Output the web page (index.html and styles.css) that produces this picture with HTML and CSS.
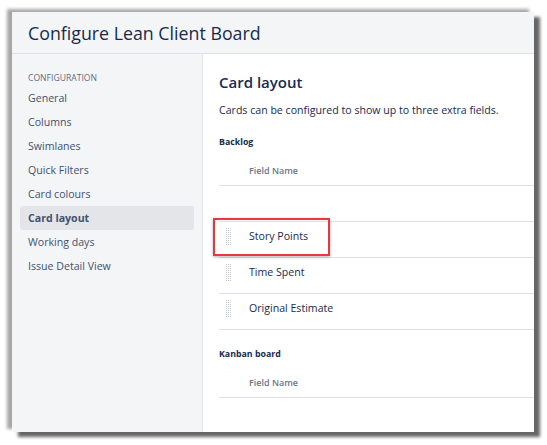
FILE: index.html
```html
<!DOCTYPE html>
<html>
<head>
<meta charset="utf-8">
<link rel="stylesheet" href="styles.css">
</head>
<body>
<div class="panel">
  <header class="header">
    <h1 class="title">Configure Lean Client Board</h1>
  </header>
  <div class="body">
    <nav class="sidebar">
      <div class="nav-heading">CONFIGURATION</div>
      <ul class="nav-list">
        <li class="nav-item">General</li>
        <li class="nav-item">Columns</li>
        <li class="nav-item">Swimlanes</li>
        <li class="nav-item">Quick Filters</li>
        <li class="nav-item">Card colours</li>
        <li class="nav-item is-active">Card layout</li>
        <li class="nav-item">Working days</li>
        <li class="nav-item">Issue Detail View</li>
      </ul>
    </nav>
    <main class="main">
      <h2 class="page-title">Card layout</h2>
      <p class="desc">Cards can be configured to show up to three extra fields.</p>

      <h3 class="section-title">Backlog</h3>
      <div class="table">
        <div class="thead">Field Name</div>
        <div class="row"></div>
        <div class="row highlighted">
          <span class="handle"></span><span class="cell">Story Points</span>
          <span class="callout"></span>
        </div>
        <div class="row"><span class="handle"></span><span class="cell">Time Spent</span></div>
        <div class="row"><span class="handle"></span><span class="cell">Original Estimate</span></div>
      </div>

      <h3 class="section-title kanban">Kanban board</h3>
      <div class="table">
        <div class="thead">Field Name</div>
      </div>
    </main>
  </div>
</div>
</body>
</html>
```
FILE: styles.css
```css
html, body {
  margin: 0;
  padding: 0;
  background: #ffffff;
}
body {
  font-family: "Open Sans", "Noto Sans", sans-serif;
  color: #172b4d;
  width: 547px;
  height: 445px;
  overflow: hidden;
}
.panel {
  margin: 12px 0 0 12px;
  width: 522px;
  height: 420px;
  background: #ffffff;
  display: flex;
  flex-direction: column;
  box-shadow: -5px -3px 3px rgba(0,0,0,0.35), 6px 5px 3px rgba(0,0,0,0.6);
  overflow: hidden;
}
.header {
  height: 41px;
  background: #f4f5f7;
  border-bottom: 1px solid #dfe1e6;
  display: flex;
  align-items: center;
  padding-left: 16px;
  flex: none;
}
.title {
  margin: 0;
  font-size: 17.8px;
  font-weight: 400;
  color: #172b4d;
}
.body {
  flex: 1;
  display: flex;
  min-height: 0;
}
.sidebar {
  width: 174px;
  flex: none;
  background: #f4f5f7;
  border-right: 1px solid #dfe1e6;
  padding: 16px 8px 0;
}
.nav-heading {
  font-size: 8.6px;
  line-height: 16px;
  color: #5e6c84;
  padding-left: 8px;
  font-weight: 400;
}
.nav-list {
  list-style: none;
  margin: 0;
  padding: 0;
}
.nav-item {
  height: 24px;
  line-height: 24px;
  padding-left: 8px;
  font-size: 10.6px;
  color: #42526e;
  border-radius: 3px;
}
.nav-item.is-active {
  background: #e4e5e9;
  font-weight: 700;
}
.main {
  flex: 1;
  padding: 16px 0 0 16px;
  min-width: 0;
}
.page-title {
  margin: 0;
  font-size: 15px;
  line-height: 24px;
  font-weight: 600;
  color: #172b4d;
}
.desc {
  margin: 7px 0 0;
  font-size: 10.6px;
  line-height: 18px;
  color: #172b4d;
}
.section-title {
  margin: 15px 0 0;
  font-size: 8.8px;
  line-height: 16px;
  font-weight: 700;
  color: #172b4d;
}
.section-title.kanban {
  margin-top: 16px;
}
.table {
  margin-top: 6px;
}
.thead {
  height: 29px;
  line-height: 30px;
  padding-left: 30px;
  font-size: 9px;
  font-weight: 600;
  color: #6b778c;
  border-bottom: 1px solid #dfe1e6;
}
.row {
  box-sizing: border-box;
  padding-bottom: 7px;
  height: 36px;
  border-bottom: 1px solid #dfe1e6;
  display: flex;
  align-items: center;
  position: relative;
}
.handle {
  width: 5px;
  height: 17px;
  margin-left: 7px;
  margin-right: 18px;
  background-color: #c1c7d0;
  background-image:
    linear-gradient(90deg, transparent 1px, #ffffff 1px),
    linear-gradient(transparent 1px, #ffffff 1px);
  background-size: 2px 2px;
  flex: none;
}
.cell {
  font-size: 10.6px;
  color: #172b4d;
}
.callout {
  position: absolute;
  left: -6px;
  top: -4px;
  width: 113px;
  height: 34px;
  border: 2px solid #e5393f;
  box-shadow: 0 1px 3px rgba(0,0,0,0.3);
}
```
